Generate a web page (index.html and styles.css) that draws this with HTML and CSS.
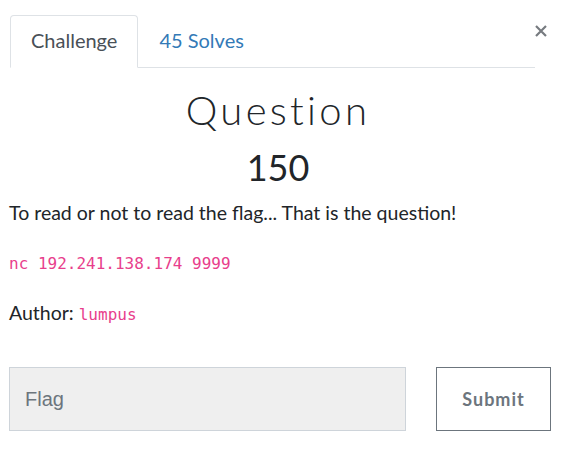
FILE: index.html
```html
<!DOCTYPE html>
<html lang="en">
<head>
    <meta charset="UTF-8">
    <title>Question</title>
    <link rel="stylesheet" href="styles.css">
</head>
<body>
    <div class="modal">
        <div class="top">
            <ul class="tabs">
                <li class="tab active">Challenge</li>
                <li class="tab">45 Solves</li>
            </ul>
            <svg class="close" width="12" height="12" viewBox="0 0 12 12">
                <path d="M1 1L11 11M11 1L1 11" stroke="#777b80" stroke-width="2.2" fill="none"/>
            </svg>
        </div>
        <h2 class="name">Question</h2>
        <h3 class="value">150</h3>
        <p class="desc">To read or not to read the flag... That is the question!</p>
        <p><code>nc 192.241.138.174 9999</code></p>
        <p>Author: <code>lumpus</code></p>
        <div class="submit-row">
            <input class="flag" type="text" placeholder="Flag">
            <button class="submit">Submit</button>
        </div>
    </div>
</body>
</html>
```

FILE: styles.css
```css
body {
    margin: 0;
    font-family: Lato, "Open Sans", sans-serif;
    color: #212529;
    background: #ffffff;
}
.modal {
    padding: 15px 24px 0 9px;
}
.top {
    display: flex;
    align-items: flex-start;
}
.tabs {
    flex: 1;
    display: flex;
    list-style: none;
    margin: 0 0 0 1px;
    padding: 0;
    border-bottom: 1px solid #dee2e6;
}
.tab {
    padding: 12px 20px 15px;
    font-size: 20px;
    line-height: 24px;
    color: #337ab7;
    border: 1px solid transparent;
    border-radius: 4px 4px 0 0;
    margin-bottom: -1px;
}
.tab.active {
    color: #495057;
    border-color: #dee2e6 #dee2e6 #ffffff;
    background: #ffffff;
}
.close {
    margin-top: 10px;
    flex-shrink: 0;
}
.name {
    margin: 18px 0 0;
    text-align: center;
    font-size: 40px;
    font-weight: 300;
    letter-spacing: 3.3px;
    line-height: 48px;
}
.value {
    margin: 12px 0 0;
    text-align: center;
    font-size: 36px;
    font-weight: 400;
    line-height: 43px;
}
p {
    margin: 0 0 20px;
    font-size: 19.5px;
    line-height: 29px;
}
.desc {
    margin-top: 9px;
}
code {
    font-family: "DejaVu Sans Mono", monospace;
    font-size: 16px;
    color: #e83e8c;
}
.submit-row {
    display: flex;
    gap: 30px;
    margin: 38px -4px 0 0;
}
.flag {
    flex: 0 0 397px;
    height: 64px;
    box-sizing: border-box;
    padding: 0 15px;
    background: #efefef;
    border: 1px solid #ced4da;
    font-family: "Liberation Sans", Arial, sans-serif;
    font-size: 20px;
    color: #495057;
}
.flag::placeholder {
    color: #6c757d;
}
.submit {
    flex: 0 0 115px;
    height: 64px;
    background: #ffffff;
    border: 1px solid #6c757d;
    border-radius: 0;
    font-family: Lato, sans-serif;
    font-weight: bold;
    font-size: 18px;
    letter-spacing: 1px;
    color: #6c757d;
}
```
